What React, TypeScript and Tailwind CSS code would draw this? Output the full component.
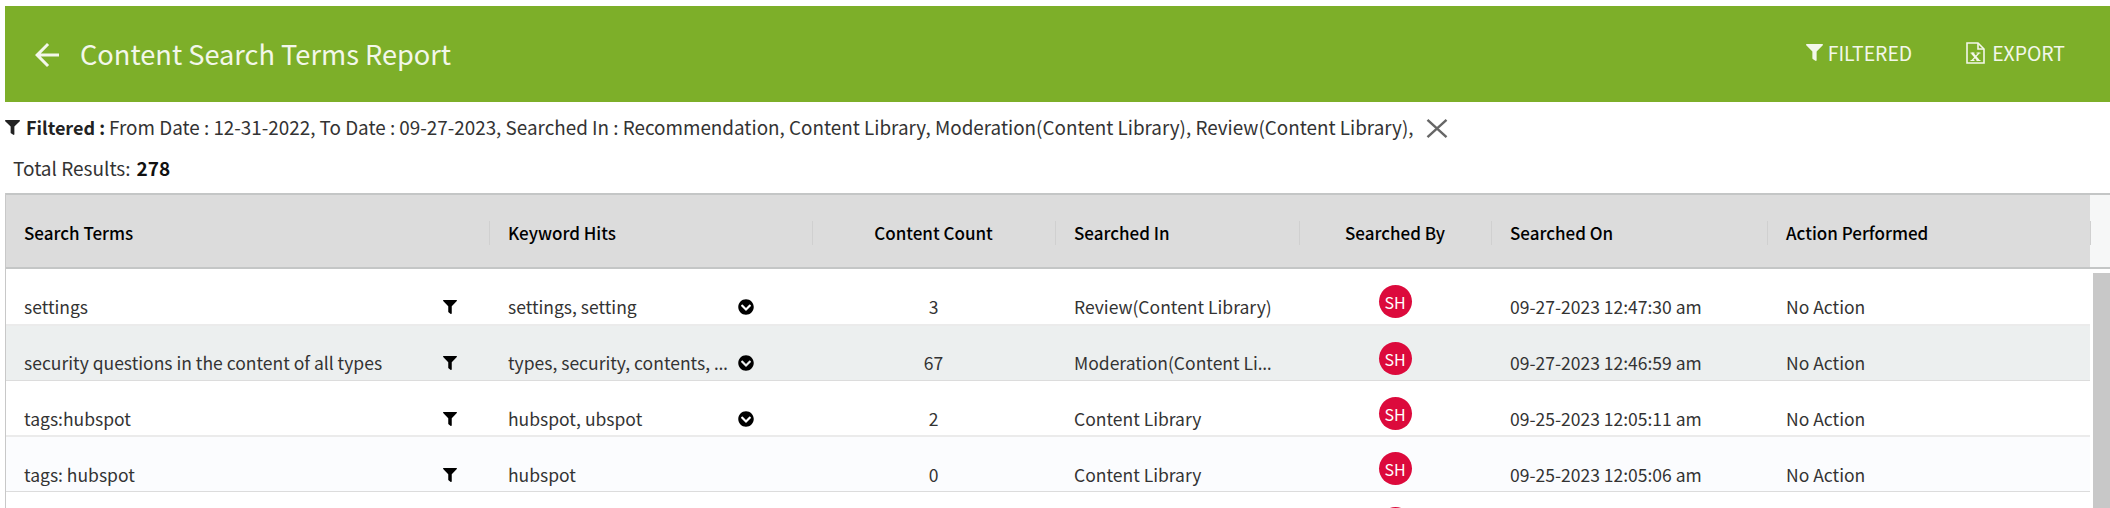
import React from "react";
import { FaFilter, FaChevronCircleDown } from "react-icons/fa";

const font = "font-['Noto_Sans_CJK_SC','Noto_Sans',sans-serif]";
const cols = "grid grid-cols-[483px_323px_243px_244px_192px_276px_323px]";

function Sep({ show = true }: { show?: boolean }) {
  return show ? <span className="absolute left-0 top-[26px] h-[24px] w-px bg-[#d0d0d0]" /> : null;
}

function Head({ label, center, first, sep = true }: { label: string; center?: boolean; first?: boolean; sep?: boolean }) {
  return (
    <div className={`relative flex h-[72px] items-center ${first ? "pl-[18px]" : "pl-[19px]"} pr-[19px] pt-[3px] text-[17px] font-medium text-black ${center ? "justify-center" : ""}`}>
      <Sep show={sep} />
      {label}
    </div>
  );
}

function Dots() {
  return <span className="font-['Noto_Sans',sans-serif]">…</span>;
}

type RowT = {
  term: string;
  hits: React.ReactNode;
  chevron: boolean;
  count: string;
  inn: React.ReactNode;
  on: string;
  cls: string;
  av: string;
};

const rows: RowT[] = [
  { term: "settings", hits: "settings, setting", chevron: true, count: "3", inn: "Review(Content Library)", on: "09-27-2023 12:47:30 am", cls: "h-[57px] pt-[26px] bg-white border-b-2 border-[#ebebeb]", av: "-mt-[10px]" },
  { term: "security questions in the content of all types", hits: <>types, security, contents, <Dots /></>, chevron: true, count: "67", inn: <>Moderation(Content Li<Dots /></>, on: "09-27-2023 12:46:59 am", cls: "h-[55px] pt-[25px] bg-[#ecefef] border-b border-[#dcdcdc]", av: "-mt-[9px]" },
  { term: "tags:hubspot", hits: "hubspot, ubspot", chevron: true, count: "2", inn: "Content Library", on: "09-25-2023 12:05:11 am", cls: "h-[56px] pt-[26px] bg-white border-b-2 border-[#ebebeb]", av: "-mt-[10px]" },
  { term: "tags: hubspot", hits: "hubspot", chevron: false, count: "0", inn: "Content Library", on: "09-25-2023 12:05:06 am", cls: "h-[55px] pt-[26px] bg-[#fbfcfe] border-b border-[#dcdcdc]", av: "-mt-[11px]" },
  { term: "", hits: "", chevron: false, count: "", inn: "", on: "", cls: "h-[56px] pt-[25px] bg-white", av: "-mt-[10px]" },
];

function Avatar() {
  return (
    <div className="flex h-[33px] w-[33px] items-center justify-center rounded-full bg-[#dc0a3c] text-[16px] text-white">
      SH
    </div>
  );
}

function Row({ r }: { r: RowT }) {
  return (
    <div className={`${cols} ${r.cls} items-start text-[17.5px] leading-[24px] text-[#333]`}>
      <div className="flex items-center justify-between pl-[18px] pr-[32px]">
        <span>{r.term}</span>
        {r.term && <FaFilter className="h-[14px] w-[14px] text-black" />}
      </div>
      <div className="flex items-center pl-[19px]">
        <span className="w-[226px] whitespace-nowrap">{r.hits}</span>
        {r.chevron && <FaChevronCircleDown className="ml-[4px] h-[16px] w-[16px] text-black" />}
      </div>
      <div className="text-center">{r.count}</div>
      <div className="pl-[19px]"><div className="w-[204px] whitespace-nowrap">{r.inn}</div></div>
      <div className={`flex justify-center ${r.av}`}><Avatar /></div>
      <div className="pl-[19px]">{r.on}</div>
      <div className="pl-[19px]">{r.inn ? "No Action" : ""}</div>
    </div>
  );
}

export default function App() {
  return (
    <div className={`${font} h-screen overflow-hidden bg-white pl-[5px] pt-[6px]`}>
      <header className="flex h-[96px] items-center justify-between bg-[#7daf29] pb-[2px] pl-[24px] pr-[45px] text-[#f3f7ea]">
        <div className="flex items-center">
          <svg viewBox="0 0 24 24" className="mt-[4px] h-[36px] w-[36px]" fill="currentColor">
            <path d="M20 11H7.83l5.59-5.59L12 4l-8 8 8 8 1.41-1.41L7.83 13H20v-2z" />
          </svg>
          <h1 className="ml-[15px] text-[27.2px] font-normal">Content Search Terms Report</h1>
        </div>
        <div className="flex items-center text-[19.4px]">
          <FaFilter className="h-[17px] w-[17px]" />
          <span className="ml-[5px]">FILTERED</span>
          <svg viewBox="0 0 19 22" className="ml-[54px] h-[22px] w-[19px]" fill="none" stroke="currentColor" strokeWidth="1.6">
            <path d="M1 1h11l6 6v14H1z" />
            <path d="M12 1v6h6" />
            <path d="M6 11l6.5 7.5" strokeWidth="2.4" />
            <path d="M13 11l-7 7.5" strokeWidth="1.2" />
            <path d="M4.5 11h4M10.5 11h4M4.5 18.5h4M10.5 18.5h4" strokeWidth="1" />
          </svg>
          <span className="ml-[7px]">EXPORT</span>
        </div>
      </header>

      <div className="mt-[11px] flex h-[28px] items-center text-[18.85px] text-[#333]">
        <FaFilter className="h-[15px] w-[15px] text-[#222]" />
        <span className="ml-[6px] text-[18px] font-bold text-[#222]">Filtered :</span>
        <span className="ml-[4px]">From Date : 12-31-2022, To Date : 09-27-2023, Searched In : Recommendation, Content Library, Moderation(Content Library), Review(Content Library),</span>
        <svg viewBox="0 0 22 20" className="ml-[12px] mt-[2px] h-[19px] w-[22px]" stroke="#666" strokeWidth="2.6" fill="none">
          <path d="M1 1l20 18M21 1L1 19" />
        </svg>
      </div>

      <div className="mt-[13px] flex h-[28px] items-center pl-[8px] text-[19px] text-[#333]">
        <span>Total Results:</span>
        <span className="ml-[6px] font-bold text-[#111]">278</span>
      </div>

      <div className="relative mt-[11px] border-l border-[#c8c8c8]">
        <div className="flex border-y-2 border-[#c4c6c6]">
          <div className={`${cols} bg-[#dcdcdc]`}>
            <Head label="Search Terms" first sep={false} />
            <Head label="Keyword Hits" />
            <Head label="Content Count" center />
            <Head label="Searched In" />
            <Head label="Searched By" center />
            <Head label="Searched On" />
            <Head label="Action Performed" />
          </div>
          <div className="relative flex-1 bg-[#f6f7f7]"><Sep /></div>
        </div>
        <div className="flex">
          <div>
            {rows.map((r, i) => <Row key={i} r={r} />)}
          </div>
          <div className="ml-[3px] mt-[4px] w-[17px] bg-[#c8c8c8]" />
        </div>
      </div>
    </div>
  );
}
